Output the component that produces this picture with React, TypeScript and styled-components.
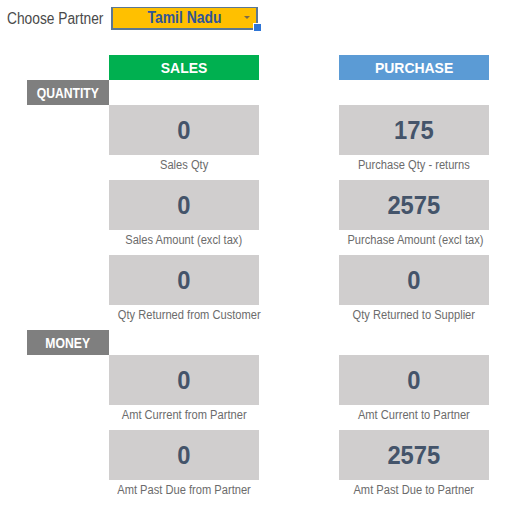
import React from "react";
import styled, { createGlobalStyle } from "styled-components";

const Global = createGlobalStyle`
  html, body { margin: 0; padding: 0; background: #ffffff; }
  body { font-family: "Liberation Sans", Arial, sans-serif; }
`;

const Page = styled.div`
  width: 507px;
  height: 508px;
  position: relative;
  overflow: hidden;
`;

const Squeeze = styled.span<{ $x: number; $origin?: string }>`
  display: inline-block;
  white-space: nowrap;
  transform: scaleX(${(p) => p.$x});
  transform-origin: ${(p) => p.$origin || "center"};
`;

const TopBar = styled.div`
  display: flex;
  align-items: center;
  padding: 7px 0 0 7px;
  height: 23px;
  gap: 8px;
`;

const ChooseLabel = styled.span`
  font-size: 16px;
  color: #4a4a4a;
  line-height: 23px;
  width: 96px;
  white-space: nowrap;
`;

const Dropdown = styled.div`
  position: relative;
  box-sizing: border-box;
  width: 147px;
  height: 23px;
  background: #ffc000;
  border: 2px solid #5b7793;
  border-top-width: 1px;
  display: flex;
  align-items: center;
  justify-content: center;
  font-size: 16px;
  font-weight: bold;
  color: #2f5597;
`;

const Arrow = styled.span`
  position: absolute;
  right: 6px;
  top: 8px;
  width: 0;
  height: 0;
  border-left: 3px solid transparent;
  border-right: 3px solid transparent;
  border-top: 3px solid #7a6a4a;
`;

const Handle = styled.span`
  position: absolute;
  right: -6px;
  bottom: -4px;
  width: 7px;
  height: 7px;
  background: #2e75d6;
  border: 1px solid #ffffff;
`;

const Grid = styled.div`
  display: grid;
  grid-template-columns: 82px 150px 80px 150px;
  grid-auto-rows: 25px;
  margin: 25px 0 0 27px;
`;

const Header = styled.div<{ $bg: string; $col: number }>`
  grid-column: ${(p) => p.$col};
  background: ${(p) => p.$bg};
  color: #ffffff;
  font-weight: bold;
  font-size: 15px;
  display: flex;
  align-items: center;
  justify-content: center;
`;

const Section = styled.div<{ $row: number }>`
  grid-column: 1;
  grid-row: ${(p) => p.$row};
  background: #7f7f7f;
  color: #ffffff;
  font-weight: bold;
  font-size: 14px;
  display: flex;
  align-items: center;
  justify-content: center;
`;

const Card = styled.div<{ $col: number; $row: number }>`
  grid-column: ${(p) => p.$col};
  grid-row: ${(p) => p.$row} / span 2;
  background: #d0cece;
  color: #44546a;
  font-weight: bold;
  font-size: 25px;
  display: flex;
  align-items: center;
  justify-content: center;
`;

const Caption = styled.div<{ $col: number; $row: number }>`
  grid-column: ${(p) => p.$col};
  grid-row: ${(p) => p.$row};
  font-size: 12.5px;
  color: #6b6b6b;
  text-align: center;
  line-height: 20px;
  white-space: nowrap;
`;

type Item = { value: string; label: string };
const sales: Item[] = [
  { value: "0", label: "Sales Qty" },
  { value: "0", label: "Sales Amount (excl tax)" },
  { value: "0", label: "Qty Returned from Customer" },
  { value: "0", label: "Amt Current from Partner" },
  { value: "0", label: "Amt Past Due from Partner" },
];
const purchase: Item[] = [
  { value: "175", label: "Purchase Qty - returns" },
  { value: "2575", label: "Purchase Amount (excl tax)" },
  { value: "0", label: "Qty Returned to Supplier" },
  { value: "0", label: "Amt Current to Partner" },
  { value: "2575", label: "Amt Past Due to Partner" },
];

// grid rows: 1 header, 2 QUANTITY, 3-4 card, 5 caption, 6-7, 8, 9-10, 11, 12 MONEY, 13-14, 15, 16-17, 18
const cardRows = [3, 6, 9, 13, 16];

export default function App() {
  return (
    <Page>
      <Global />
      <TopBar>
        <ChooseLabel>
          <Squeeze $x={0.86} $origin="left">Choose Partner</Squeeze>
        </ChooseLabel>
        <Dropdown>
          <Squeeze $x={0.87}>Tamil Nadu</Squeeze>
          <Arrow />
          <Handle />
        </Dropdown>
      </TopBar>
      <Grid>
        <Header $bg="#00b050" $col={2}>
          <Squeeze $x={0.93}>SALES</Squeeze>
        </Header>
        <Header $bg="#5b9bd5" $col={4}>
          <Squeeze $x={0.93}>PURCHASE</Squeeze>
        </Header>
        <Section $row={2}>
          <Squeeze $x={0.87}>QUANTITY</Squeeze>
        </Section>
        <Section $row={12}>
          <Squeeze $x={0.87}>MONEY</Squeeze>
        </Section>
        {cardRows.map((r, i) => (
          <React.Fragment key={i}>
            <Card $col={2} $row={r}>
              <Squeeze $x={0.95}>{sales[i].value}</Squeeze>
            </Card>
            <Caption $col={2} $row={r + 2}>
              <Squeeze $x={0.89}>{sales[i].label}</Squeeze>
            </Caption>
            <Card $col={4} $row={r}>
              <Squeeze $x={0.95}>{purchase[i].value}</Squeeze>
            </Card>
            <Caption $col={4} $row={r + 2}>
              <Squeeze $x={0.89}>{purchase[i].label}</Squeeze>
            </Caption>
          </React.Fragment>
        ))}
      </Grid>
    </Page>
  );
}
